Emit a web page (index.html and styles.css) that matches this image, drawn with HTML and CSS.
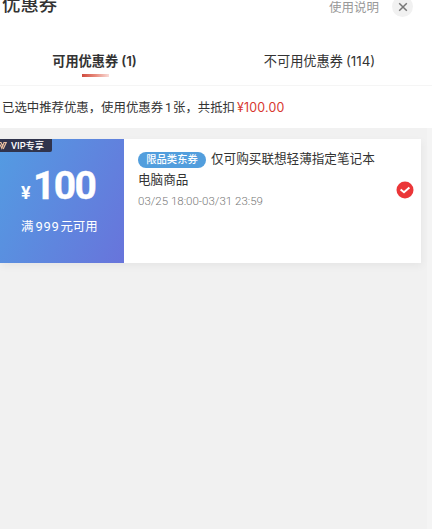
FILE: index.html
```html
<!DOCTYPE html>
<html lang="zh-CN">
<head>
    <meta charset="UTF-8">
    <meta name="viewport" content="width=device-width, initial-scale=1.0">
    <title>优惠券</title>
    <link rel="stylesheet" href="styles.css">
</head>
<body>
    <div class="page">
        <header class="header">
            <h1 class="title">优惠券</h1>
            <a class="help">使用说明</a>
            <button class="close" aria-label="关闭">
                <svg width="10" height="10" viewBox="0 0 10 10"><path d="M1.2 1.2L8.8 8.8M8.8 1.2L1.2 8.8"/></svg>
            </button>
        </header>
        <nav class="tabs">
            <div class="tab active">可用优惠券<span class="count">(1)</span></div>
            <div class="tab">不可用优惠券<span class="count">(114)</span></div>
        </nav>
        <p class="notice">已选中推荐优惠，使用优惠券<span class="num">1</span>张，共抵扣<span class="saved">¥100.00</span></p>
        <main class="list">
            <div class="coupon">
                <div class="amount">
                    <div class="vip">
                        <svg width="7" height="9" viewBox="0 0 7 9"><path d="M0 3.5L1.8 7.2L4 1.5H6.2L3.2 8M0 1.5H1L2.6 5"/></svg>
                        <span>VIP专享</span>
                    </div>
                    <div class="price"><span class="yen">¥</span><span class="value">100</span></div>
                    <div class="rule">满<span class="num">999</span>元可用</div>
                </div>
                <div class="info">
                    <div class="desc"><span class="tag">限品类东券</span>仅可购买联想轻薄指定笔记本电脑商品</div>
                    <div class="date">03/25 18:00-03/31 23:59</div>
                </div>
                <svg class="check" width="18" height="18" viewBox="0 0 18 18"><circle cx="9" cy="9" r="8.5"/><path d="M4.6 8.4L8 11.2L13.4 6.6"/></svg>
            </div>
        </main>
    </div>
</body>
</html>
```
FILE: styles.css
```css
* {
    box-sizing: border-box;
}
body {
    margin: 0;
    background: #fff;
    color: #333;
    font-family: Roboto, "Noto Sans CJK SC", sans-serif;
    overflow: hidden;
}
.page {
    width: 432px;
    height: 529px;
    display: flex;
    flex-direction: column;
}
.header {
    height: 40px;
    display: flex;
    align-items: flex-start;
    padding-left: 2px;
    padding-right: 19px;
}
.title {
    margin: -9px auto 0 0;
    font-size: 18.4px;
    line-height: 28px;
    font-weight: 500;
}
.help {
    font-size: 12.5px;
    line-height: 15px;
    color: #999;
    margin-right: 13px;
}
.close {
    width: 21px;
    height: 21px;
    margin-top: -4px;
    padding: 0;
    border: none;
    border-radius: 50%;
    background: #f1f1f1;
    display: flex;
    align-items: center;
    justify-content: center;
}
.close path {
    stroke: #777;
    stroke-width: 1.5;
    fill: none;
}
.tabs {
    height: 46px;
    display: flex;
    margin-left: -18px;
    border-bottom: 1px solid #f5f5f5;
}
.tab {
    flex: 1;
    display: flex;
    justify-content: center;
    font-size: 13.2px;
    line-height: 43px;
    position: relative;
}
.active {
    font-weight: 600;
}
.active::after {
    content: "";
    position: absolute;
    left: calc(50% - 13px);
    top: 34px;
    width: 27px;
    height: 3px;
    background: linear-gradient(90deg, #cf4a3d, #e88b7d 50%, #f9dcd8);
}
.count {
    margin-left: 3px;
    font-family: Inter, sans-serif;
    font-size: 13.4px;
}
.notice {
    height: 42px;
    margin: 0;
    padding-left: 2px;
    font-size: 12.4px;
    line-height: 43px;
    white-space: nowrap;
}
.notice .num {
    margin: 0 1px 0 2px;
}
.saved {
    margin-left: 2px;
    font-family: Inter, sans-serif;
    font-size: 12.4px;
    letter-spacing: 0.2px;
    color: #d8372f;
}
.list {
    flex: 1;
    background: #f1f1f1;
    border-right: 5px solid #f4f4f4;
    padding-top: 11px;
}
.coupon {
    width: 421px;
    height: 124px;
    display: flex;
    align-items: flex-start;
    background: #fff;
    box-shadow: 1px 3px 8px rgba(0, 0, 0, 0.05);
}
.amount {
    width: 124px;
    height: 124px;
    flex: none;
    color: #fff;
    background: linear-gradient(115deg, #539ce2, #6874db);
}
.vip {
    width: 52px;
    height: 13px;
    display: flex;
    align-items: center;
    gap: 4px;
    background: #30344c;
    border-bottom-right-radius: 2px;
    font-size: 9.3px;
    line-height: 13px;
    font-weight: 500;
    white-space: nowrap;
}
.vip svg {
    flex: none;
}
.vip path {
    fill: none;
    stroke: #eac0a0;
    stroke-width: 1.2;
}
.price {
    display: flex;
    align-items: baseline;
    height: 60px;
    padding-left: 21px;
    padding-top: 12px;
    line-height: 44px;
    font-weight: 700;
}
.yen {
    width: 12px;
    font-size: 18px;
}
.value {
    font-size: 39px;
    letter-spacing: -1.6px;
    -webkit-text-stroke: 0.4px #fff;
}
.rule {
    padding-left: 21px;
    font-size: 12.4px;
    line-height: 30px;
}
.rule .num {
    margin: 0 1px 0 2px;
    font-size: 13px;
    letter-spacing: 0.7px;
}
.info {
    width: 244px;
    margin-left: 14px;
    padding-top: 9px;
}
.desc {
    font-size: 12.6px;
    line-height: 21px;
}
.tag {
    display: inline-block;
    width: 68px;
    height: 16px;
    margin-right: 5px;
    border-radius: 8px;
    background: #529edd;
    color: #fff;
    font-size: 10.3px;
    font-weight: 500;
    line-height: 16px;
    text-align: center;
}
.date {
    padding-top: 1px;
    font-size: 11.5px;
    font-weight: 300;
    line-height: 20px;
    color: #777;
}
.check {
    margin: 42px 0 0 14px;
}
.check circle {
    fill: #eb3638;
}
.check path {
    fill: none;
    stroke: #fff;
    stroke-width: 2;
}
```
